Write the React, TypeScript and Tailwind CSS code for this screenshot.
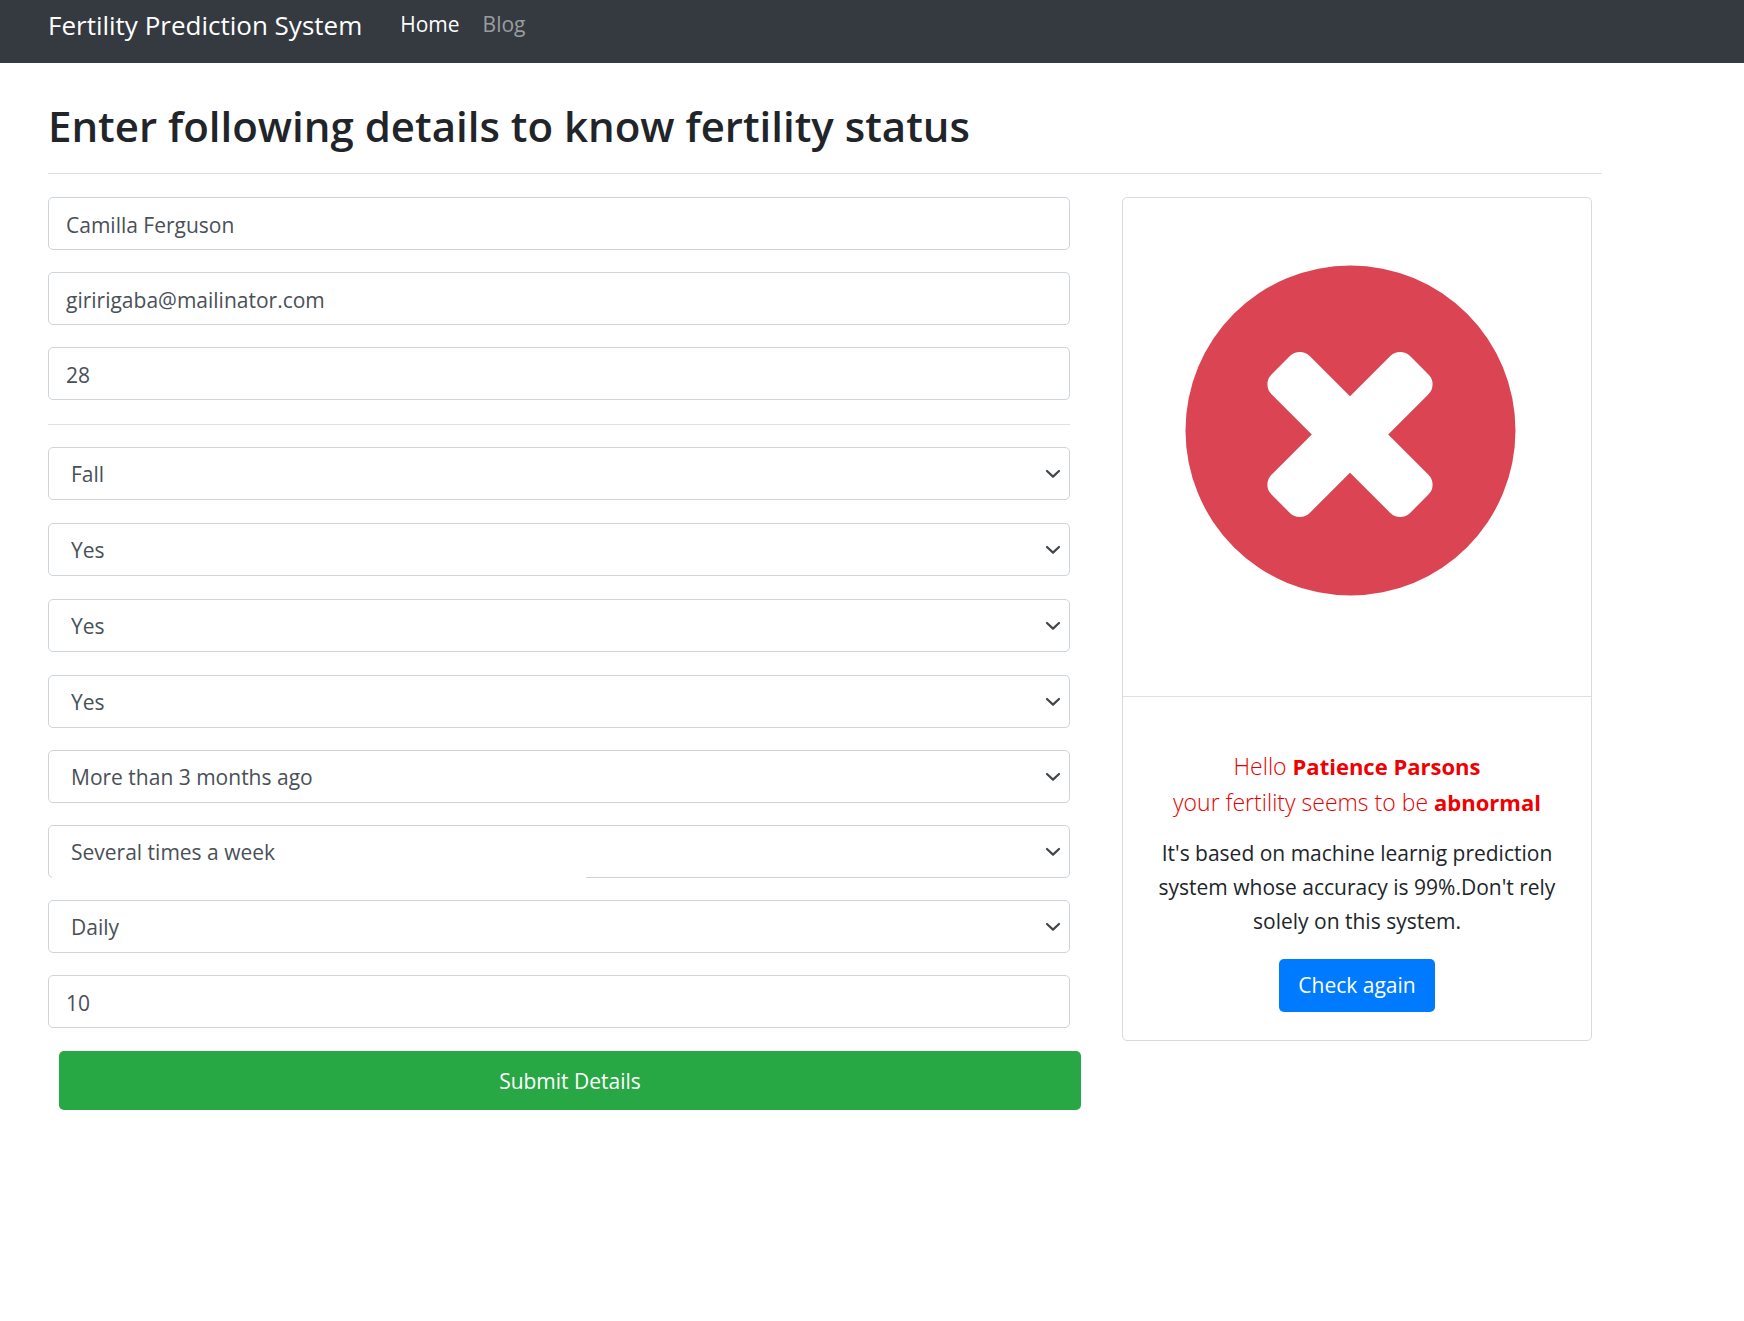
import { useState } from "react";

const control =
  "block h-[53px] w-full appearance-none rounded-[5px] border border-[#ced4da] bg-white text-[21px] leading-8 text-[#495057] outline-none focus:border-[#80bdff]";

function TextField({ label, value, type = "text" }: { label: string; value: string; type?: string }) {
  return (
    <input
      aria-label={label}
      type={type}
      defaultValue={value}
      className={`${control} px-[17px] pt-0.5`}
    />
  );
}

function SelectField({
  label,
  options,
  value,
  brokenEdge = false,
}: {
  label: string;
  options: string[];
  value: string;
  brokenEdge?: boolean;
}) {
  return (
    <div className="relative">
      <select aria-label={label} defaultValue={value} className={`${control} px-[22px]`}>
        {options.map((o) => (
          <option key={o}>{o}</option>
        ))}
      </select>
      <svg
        viewBox="0 0 16 10"
        aria-hidden="true"
        className="pointer-events-none absolute top-[22px] right-[9px] h-[10px] w-4 text-[#41464b]"
        fill="none"
        stroke="currentColor"
        strokeWidth="2.2"
        strokeLinecap="round"
        strokeLinejoin="round"
      >
        <path d="M2 2 L8 7.6 L14 2" />
      </svg>
      {brokenEdge && <span className="absolute right-[484px] bottom-0 left-1 h-px bg-white" />}
    </div>
  );
}

function CrossMark() {
  return (
    <svg viewBox="0 0 468 498" role="img" aria-label="Abnormal result" className="block w-full">
      <circle cx="227.5" cy="232.5" r="165" fill="#da4453" />
      <g fill="#fff" transform="translate(227 236.5) rotate(45)">
        <rect x="-98" y="-27" width="196" height="54" rx="14" />
        <rect x="-27" y="-98" width="54" height="196" rx="14" />
      </g>
    </svg>
  );
}

export default function App() {
  const [submitted, setSubmitted] = useState(false);
  return (
    <div className="min-h-screen bg-white font-['Open_Sans',sans-serif] text-[21px] text-[#212529]">
      <nav className="flex h-[63px] items-start gap-[38px] bg-[#343a40] pt-1 pl-12">
        <a href="#" className="text-[26px] leading-[42px] text-white">
          Fertility Prediction System
        </a>
        <div className="flex gap-[23px] leading-10">
          <a href="#home" className="text-white">
            Home
          </a>
          <a href="#blog" className="text-white/50">
            Blog
          </a>
        </div>
      </nav>

      <main className="ml-[27px] max-w-[1596px] px-[21px] pt-9">
        <h1 className="text-[42px] leading-[54px] font-semibold">
          Enter following details to know fertility status
        </h1>
        <hr className="mt-5 border-[#e0e0e0]" />

        <div className="-mx-[21px] mt-[23px] flex items-start">
          <form
            className="w-2/3 px-[21px]"
            onSubmit={(e) => {
              e.preventDefault();
              setSubmitted(!submitted);
            }}
          >
            <div className="flex flex-col gap-[22px]">
              <TextField label="Name" value="Camilla Ferguson" />
              <TextField label="Email" type="email" value="giririgaba@mailinator.com" />
              <TextField label="Age" value="28" />
            </div>
            <hr className="mt-6 mb-[22px] border-[#e0e0e0]" />
            <div className="flex flex-col gap-[23px]">
              <SelectField label="Season" value="Fall" options={["Winter", "Spring", "Summer", "Fall"]} />
              <SelectField label="Childish diseases" value="Yes" options={["Yes", "No"]} />
              <SelectField label="Accident or serious trauma" value="Yes" options={["Yes", "No"]} />
              <SelectField label="Surgical intervention" value="Yes" options={["Yes", "No"]} />
            </div>
            <div className="mt-[22px] flex flex-col gap-[22px]">
              <SelectField
                label="High fevers in the last year"
                value="More than 3 months ago"
                options={["Less than 3 months ago", "More than 3 months ago", "No"]}
              />
              <SelectField
                label="Alcohol consumption"
                value="Several times a week"
                options={["Several times a day", "Every day", "Several times a week", "Once a week", "Never"]}
                brokenEdge
              />
              <SelectField label="Smoking habit" value="Daily" options={["Never", "Occasional", "Daily"]} />
              <TextField label="Hours spent sitting per day" value="10" />
            </div>
            <button
              type="submit"
              className="mt-[23px] ml-[11px] block h-[59px] w-full rounded-[5px] bg-[#28a745] pt-0.5 text-white"
            >
              Submit Details
            </button>
          </form>

          <div className="w-1/3 px-[31px]">
            <section className="rounded-[5px] border border-[#dadada] bg-white">
              <CrossMark />
              <div className="border-t border-[#e0e0e0] px-7 pt-[51px] pb-7 text-center">
                <p className="text-[23px] leading-9 font-light text-[#e60000]">
                  Hello <b className="text-[22px] font-bold text-[#f00000]">Patience Parsons</b>
                  <br />
                  your fertility seems to be{" "}
                  <b className="text-[22px] font-bold text-[#f00000]">abnormal</b>
                </p>
                <p className="mt-4 leading-[34px]">
                  It's based on machine learnig prediction system whose accuracy is 99%.Don't rely solely
                  on this system.
                </p>
                <button
                  type="button"
                  className="mt-[21px] h-[53px] rounded-[5px] bg-[#007bff] px-[19px] text-white"
                >
                  Check again
                </button>
              </div>
            </section>
          </div>
        </div>
      </main>
    </div>
  );
}
